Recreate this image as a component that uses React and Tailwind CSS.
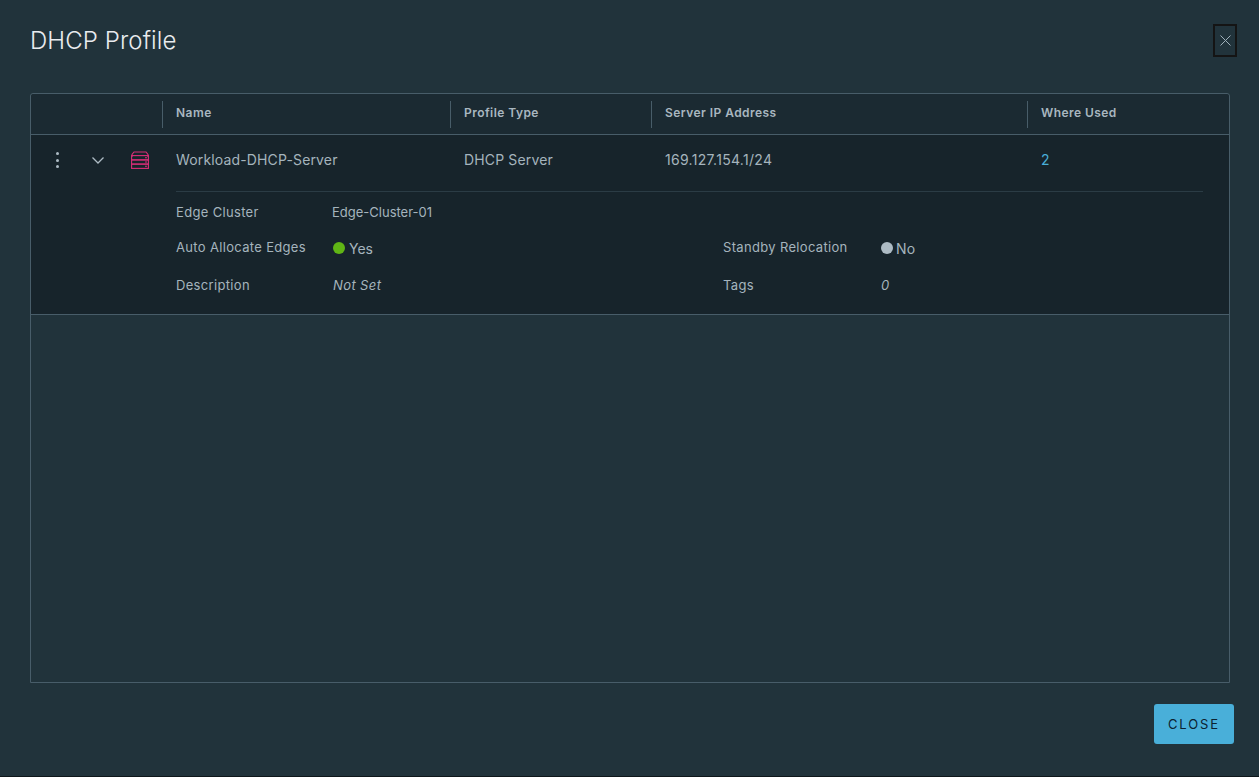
const FONT = "font-['Inter','Noto_Sans',sans-serif]";

function Head({ w, children }) {
  return (
    <div className={`${w} h-full flex items-center`}>
      <div className="h-[27px] w-px bg-[#485d69]" />
      <span className="pl-[13px] -mt-[2px] text-[12px] font-semibold text-[#a9b7c0] tracking-[0.45px]">{children}</span>
    </div>
  );
}

function ServerIcon() {
  return (
    <svg width="18" height="18" viewBox="0 0 18 18" fill="none" stroke="#d92f78" strokeWidth="1.1" className="block">
      <path d="M1 6V3.5L3 1h12l2 2.5V6" />
      <rect x="0.6" y="4.6" width="16.8" height="4.3" />
      <rect x="0.6" y="8.9" width="16.8" height="4.2" />
      <rect x="0.6" y="13.1" width="16.8" height="4.3" />
      <path d="M14 6.8h2M14 11h2M14 15.2h2" />
    </svg>
  );
}

function Label({ w, children }) {
  return <div className={`${w} text-[13px] tracking-[0.33px] text-[#a5b4bd]`}>{children}</div>;
}

function Dot({ color }) {
  return <span className={`inline-block w-3 h-3 rounded-full ${color}`} />;
}

export default function App() {
  return (
    <div className={`${FONT} w-[1259px] h-[777px] bg-[#21333b] border-b border-[#0f171b] flex flex-col overflow-hidden pl-[30px] pr-[22px]`}>
      <div className="h-[93px] flex justify-between items-start shrink-0">
        <h1 className="mt-[25px] text-[24px] leading-[32px] font-light text-[#e9ecef] tracking-[0.1px]">DHCP Profile</h1>
        <button className="mt-[24px] w-6 h-[33px] border-2 border-[#141414] flex items-center justify-center">
          <svg width="11" height="11" viewBox="0 0 11 11" stroke="#9fb0ba" strokeWidth="1" fill="none">
            <path d="M0.5 0.5l10 10M10.5 0.5l-10 10" />
          </svg>
        </button>
      </div>

      <div className="w-[1200px] h-[590px] border border-[#485d69] rounded-t-[3px] shrink-0">
        <div className="h-[41px] bg-[#1b2a32] border-b border-[#485d69] flex items-center rounded-t-[3px]">
          <div className="w-[131px] shrink-0" />
          <Head w="w-[288px]">Name</Head>
          <Head w="w-[201px]">Profile Type</Head>
          <Head w="w-[376px]">Server IP Address</Head>
          <Head w="w-[202px]">Where Used</Head>
        </div>

        <div className="h-[180px] bg-[#17242b] border-b border-[#485d69]">
          <div className="flex h-[56px] pt-[16px]">
            <div className="w-[52px] h-[18px] flex flex-col items-center justify-center gap-[3.5px]">
              <span className="w-[3px] h-[3px] rounded-full bg-[#adbbc4]" />
              <span className="w-[3px] h-[3px] rounded-full bg-[#adbbc4]" />
              <span className="w-[3px] h-[3px] rounded-full bg-[#adbbc4]" />
            </div>
            <div className="w-[48px] h-[18px] flex items-center justify-center pr-[18px]">
              <svg width="14" height="9" viewBox="0 0 14 9" fill="none" stroke="#adbbc4" strokeWidth="1.3">
                <path d="M1.5 1.5l5.5 5.5 5.5-5.5" />
              </svg>
            </div>
            <div className="w-[45px]"><ServerIcon /></div>
            <div className="w-[288px] h-[18px] leading-[18px] text-[14px] tracking-[0.15px] text-[#a5b4bd]">Workload-DHCP-Server</div>
            <div className="w-[201px] h-[18px] leading-[18px] text-[14px] tracking-[0.15px] text-[#a5b4bd]">DHCP Server</div>
            <div className="w-[376px] h-[18px] leading-[18px] text-[14px] tracking-[0.3px] text-[#a5b4bd]">169.127.154.1/24</div>
            <div className="h-[18px] leading-[18px] text-[14px] text-[#49afd9]">2</div>
          </div>

          <div className="ml-[145px] mr-[26px] border-t border-[#2b3c45] pt-[11px]">
            <div className="flex h-[20px] items-center">
              <Label w="w-[156px]">Edge Cluster</Label>
              <div className="text-[13px] text-[#a5b4bd]">Edge-Cluster-01</div>
            </div>
            <div className="flex h-[20px] items-center mt-[15px]">
              <Label w="w-[157px]">Auto Allocate Edges</Label>
              <div className="w-[390px] flex items-center gap-[4px] text-[14px] text-[#a5b4bd]"><Dot color="bg-[#60b515]" />Yes</div>
              <Label w="w-[158px]">Standby Relocation</Label>
              <div className="flex items-center gap-[3px] text-[14px] tracking-[0.3px] text-[#a5b4bd]"><Dot color="bg-[#adbbc4]" />No</div>
            </div>
            <div className="flex h-[20px] items-center mt-[18px]">
              <Label w="w-[157px]">Description</Label>
              <div className="w-[390px] text-[13px] italic tracking-[0.4px] text-[#a5b4bd]">Not Set</div>
              <Label w="w-[158px]">Tags</Label>
              <div className="text-[13px] italic text-[#a5b4bd]">0</div>
            </div>
          </div>
        </div>
      </div>

      <div className="flex justify-end w-[1204px] mt-[21px]">
        <button className="w-[80px] h-[40px] pt-[2px] bg-[#49afd9] rounded-[3px] text-[13px] font-normal tracking-[1.9px] text-[#0c2230]">CLOSE</button>
      </div>
    </div>
  );
}
